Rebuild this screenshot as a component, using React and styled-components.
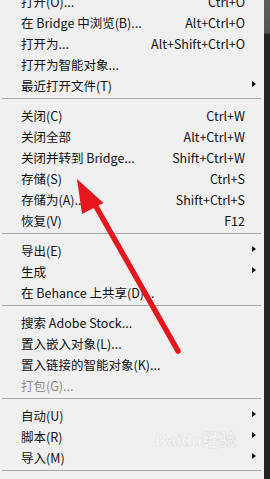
import React from "react";
import styled, { createGlobalStyle } from "styled-components";

const Global = createGlobalStyle`
  html, body { margin: 0; padding: 0; background: #262626; overflow: hidden; }
  body { width: 270px; height: 479px; }
  #root { width: 270px; height: 479px; }
`;

const Screen = styled.div`
  position: relative;
  display: flex;
  width: 270px;
  height: 479px;
  overflow: hidden;
`;

const Menu = styled.div`
  width: 264px;
  background: #f0f0f0;
  display: flex;
  flex-direction: column;
  margin-top: -9.5px;
  font-family: "Noto Sans CJK SC", "Noto Sans", sans-serif;
  font-size: 12.5px;
  color: #111;
`;

const Strip = styled.div`
  flex: 1;
  background: linear-gradient(#5c5c5c 0, #555 33px, #252525 34px, #232323 100%);
`;

const Row = styled.div`
  display: flex;
  align-items: center;
  height: 21px;
  padding-left: 21px;
  color: ${(p) => (p.$disabled ? "#8e8e8e" : "#111")};
  white-space: nowrap;
`;

const Label = styled.span`
  flex: 1;
`;

const Shortcut = styled.span`
  text-align: right;
`;

const ArrowCell = styled.span`
  width: 19px;
  display: flex;
  align-items: center;
  padding-left: 7px;
  box-sizing: border-box;
`;

const Tri = styled.span`
  width: 0;
  height: 0;
  border-top: 3px solid transparent;
  border-bottom: 3px solid transparent;
  border-left: 4px solid #111;
  margin-top: -2px;
`;

const Sep = styled.div`
  height: 1px;
  background: #a9a9a9;
  margin: 2px 3px 6px 2px;
`;

const Arrow = styled.svg`
  position: absolute;
  left: 0;
  top: 0;
  pointer-events: none;
`;

const Watermark = styled.div`
  position: absolute;
  left: 155px;
  top: 426px;
  font-family: "Liberation Sans", "Noto Sans CJK SC", sans-serif;
  font-size: 17px;
  font-weight: bold;
  color: rgba(255, 255, 255, 0.6);
  -webkit-text-stroke: 0.5px rgba(195, 195, 195, 0.55);
  pointer-events: none;
`;

const groups = [
  [
    { l: "打开(O)...", s: "Ctrl+O" },
    { l: "在 Bridge 中浏览(B)...", s: "Alt+Ctrl+O" },
    { l: "打开为...", s: "Alt+Shift+Ctrl+O" },
    { l: "打开为智能对象..." },
    { l: "最近打开文件(T)", sub: true },
  ],
  [
    { l: "关闭(C)", s: "Ctrl+W" },
    { l: "关闭全部", s: "Alt+Ctrl+W" },
    { l: "关闭并转到 Bridge...", s: "Shift+Ctrl+W" },
    { l: "存储(S)", s: "Ctrl+S" },
    { l: "存储为(A)...", s: "Shift+Ctrl+S" },
    { l: "恢复(V)", s: "F12" },
  ],
  [
    { l: "导出(E)", sub: true },
    { l: "生成", sub: true },
    { l: "在 Behance 上共享(D)..." },
  ],
  [
    { l: "搜索 Adobe Stock..." },
    { l: "置入嵌入对象(L)..." },
    { l: "置入链接的智能对象(K)..." },
    { l: "打包(G)...", d: true },
  ],
  [
    { l: "自动(U)", sub: true },
    { l: "脚本(R)", sub: true },
    { l: "导入(M)", sub: true },
  ],
];

export default function App() {
  return (
    <>
      <Global />
      <Screen>
        <Menu>
          {groups.map((g, gi) => (
            <React.Fragment key={gi}>
              {g.map((it, i) => (
                <Row key={i} $disabled={it.d}>
                  <Label>{it.l}</Label>
                  {it.s && <Shortcut>{it.s}</Shortcut>}
                  <ArrowCell>{it.sub && <Tri />}</ArrowCell>
                </Row>
              ))}
              <Sep />
            </React.Fragment>
          ))}
        </Menu>
        <Strip />
        <Watermark>Baidu经验</Watermark>
        <Arrow width="270" height="479" viewBox="0 0 270 479">
          <line x1="178" y1="351" x2="94" y2="203" stroke="#e5161c" strokeWidth="5.5" strokeLinecap="round" />
          <polygon points="77,179 103.5,203 82,214" fill="#e5161c" />
        </Arrow>
      </Screen>
    </>
  );
}
